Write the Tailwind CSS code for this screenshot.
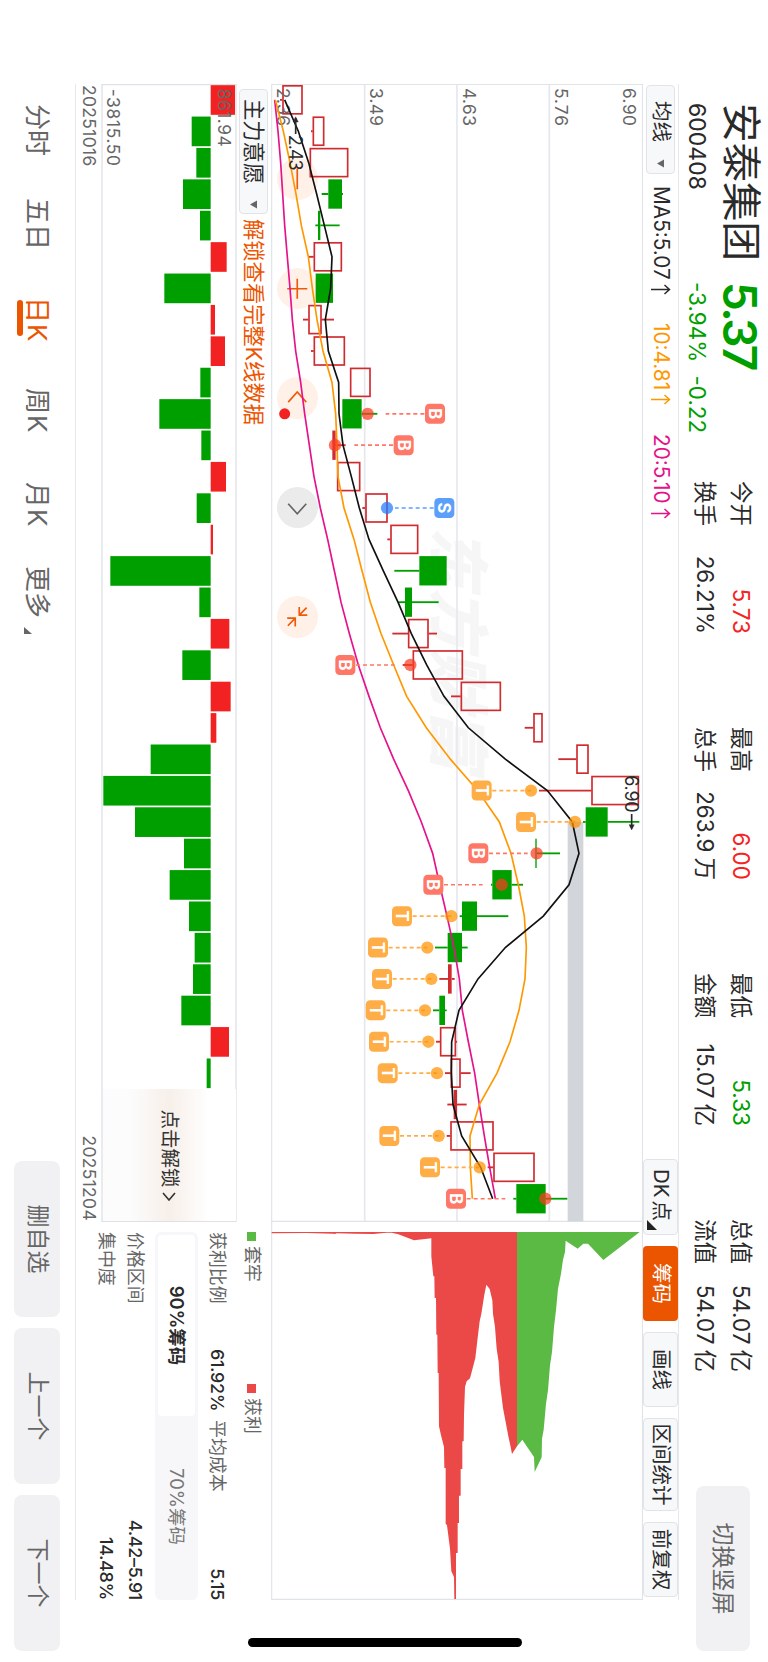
<!DOCTYPE html>
<html lang="zh-CN">
  <head>
    <meta charset="UTF-8" />
    <title>安泰集团 600408</title>
    <meta name="viewport" content="width=device-width, initial-scale=1.0" />
    <script src="https://cdn.jsdelivr.net/npm/@tailwindcss/browser@4"></script>
  </head>

  <body class="bg-white">
    <div class="relative w-[768px] h-[1662px] overflow-hidden">
      <!-- Landscape stage, turned a quarter clockwise -->
      <div
        class="absolute left-[768px] top-0 w-[1662px] h-[768px] origin-top-left rotate-90 flex flex-col pl-[84px] bg-white text-[#2a2a2a] leading-none whitespace-nowrap font-['Inter','Noto_Sans_CJK_SC',sans-serif]"
      >
        <!-- Quote header -->
        <header class="flex h-[89px] shrink-0">
          <div class="w-[397px] pl-[19px]">
            <div class="flex items-center h-[55px]">
              <h1 class="w-[179px] text-[39.5px]">安泰集团</h1>
              <span class="text-[46px] font-semibold tracking-[-2.6px] text-[#009f00]">5.37</span>
            </div>
            <div class="flex items-center h-[33px] text-[23px]">
              <span class="w-[179px]">600408</span>
              <span class="flex gap-[13px] text-[22.5px] text-[#009f00]"><span>-3.94%</span><span>-0.22</span></span>
            </div>
          </div>
          <div class="flex gap-[93px] pt-[9px] text-[22.5px]">
            <dl class="w-[153px] flex flex-col">
              <div class="flex items-center justify-between h-9"><dt>今开</dt><dd class="text-[#f52323]">5.73</dd></div>
              <div class="flex items-center justify-between h-9"><dt>换手</dt><dd>26.21%</dd></div>
            </dl>
            <dl class="w-[153px] flex flex-col">
              <div class="flex items-center justify-between h-9"><dt>最高</dt><dd class="text-[#f52323]">6.00</dd></div>
              <div class="flex items-center justify-between h-9"><dt>总手</dt><dd>263.9<span class="ml-[5px]">万</span></dd></div>
            </dl>
            <dl class="w-[153px] flex flex-col">
              <div class="flex items-center justify-between h-9"><dt>最低</dt><dd class="text-[#009f00]">5.33</dd></div>
              <div class="flex items-center justify-between h-9"><dt>金额</dt><dd>15.07<span class="ml-[5px]">亿</span></dd></div>
            </dl>
            <dl class="w-[153px] flex flex-col">
              <div class="flex items-center justify-between h-9"><dt>总值</dt><dd>54.07<span class="ml-[5px]">亿</span></dd></div>
              <div class="flex items-center justify-between h-9"><dt>流值</dt><dd>54.07<span class="ml-[5px]">亿</span></dd></div>
            </dl>
          </div>
          <button class="ml-auto mr-[11px] mt-[18px] w-[165px] h-[54px] rounded-lg bg-[#f1f1f3] text-[23px] text-[#666]">切换竖屏</button>
        </header>

        <!-- Moving averages and chart tools -->
        <div class="flex w-[1516px] h-[36px] shrink-0 items-center border-t border-[#e8e8ea] text-[20.5px]">
          <button class="flex items-center w-[89px] h-[29px] ml-px pl-[15px] gap-[17px] rounded border border-[#e1e3e8] bg-[#f7f8fa]">
            均线
            <svg width="9" height="7" viewBox="0 0 9 7"><path d="M0.5 0h8L4.5 7z" fill="#666" /></svg>
          </button>
          <div class="flex ml-3 text-[20.8px]">
            <span class="flex w-[137px]">MA5:5.07<svg class="ml-[3px]" width="13" height="21" viewBox="0 0 13 21"><path d="M6.5 20V1.5M2 6.5l4.5-5L11 6.5" fill="none" stroke="currentColor" stroke-width="1.5" /></svg></span>
            <span class="flex w-[111px] text-[#ff9800]">10:4.81<svg class="ml-[3px]" width="13" height="21" viewBox="0 0 13 21"><path d="M6.5 20V1.5M2 6.5l4.5-5L11 6.5" fill="none" stroke="currentColor" stroke-width="1.5" /></svg></span>
            <span class="flex text-[#e5128b]">20:5.10<svg class="ml-[3px]" width="13" height="21" viewBox="0 0 13 21"><path d="M6.5 20V1.5M2 6.5l4.5-5L11 6.5" fill="none" stroke="currentColor" stroke-width="1.5" /></svg></span>
          </div>
          <div class="flex gap-[11px] ml-auto mr-[3px]">
            <button class="relative w-[76px] h-[35px] pr-1 rounded border border-[#e1e3e8] bg-[#f7f8fa]">
              DK<span class="ml-[3px]">点</span>
              <svg class="absolute right-1 bottom-[3px]" width="10" height="10" viewBox="0 0 10 10"><path d="M0 10h10V0z" fill="#222" /></svg>
            </button>
            <button class="w-[75px] h-[35px] rounded bg-[#eb5500] text-white">筹码</button>
            <button class="w-[75px] h-[35px] rounded border border-[#e1e3e8] bg-[#f7f8fa]">画线</button>
            <button class="w-[93px] h-[35px] rounded border border-[#e1e3e8] bg-[#f7f8fa]">区间统计</button>
            <button class="w-[75px] h-[35px] rounded border border-[#e1e3e8] bg-[#f7f8fa]">前复权</button>
          </div>
        </div>

        <!-- Candles and chip distribution -->
        <div class="relative w-[1516px] h-[372px] shrink-0">
          <div class="absolute left-[443px] top-[154px] text-[61px] leading-[62px] font-black italic text-[#f6f6f6]">东方财富</div>
          <div class="absolute left-[74px] bottom-[6px] flex gap-[68px] text-[#f0590a]">
            <span class="size-[41.5px] rounded-full bg-[#fff1e8]"><svg viewBox="-62 -62 124 124"><path d="M-31 0H31" stroke="currentColor" stroke-width="5" /></svg></span>
            <span class="size-[41.5px] rounded-full bg-[#fff1e8]"><svg viewBox="-62 -62 124 124"><path d="M-30 0H30M0-30V30" stroke="currentColor" stroke-width="5" /></svg></span>
            <span class="size-[41.5px] rounded-full bg-[#fff1e8]"><svg viewBox="-62 -62 124 124"><path d="M13-27L-17 0L13 27" fill="none" stroke="currentColor" stroke-width="5" /></svg></span>
            <span class="size-[41.5px] rounded-full bg-[#ebebeb] text-[#666]"><svg viewBox="-62 -62 124 124"><path d="M-12-27L18 0L-12 27" fill="none" stroke="currentColor" stroke-width="5" /></svg></span>
            <span class="size-[41.5px] rounded-full bg-[#fff1e8]"><svg viewBox="-62 -62 124 124"><path d="M-29-6H-5V-30M-5-6L-27-28M29 6H4V30M4 6L27 28" fill="none" stroke="currentColor" stroke-width="5" /></svg></span>
          </div>
          <svg id="kline" class="relative" width="1516" height="372" viewBox="0 0 4548 1116"></svg>
        </div>

        <!-- Indicator pane on the left, chip figures on the right -->
        <div class="flex w-[1516px] h-[196px] shrink-0 border-b border-[#e8e8ea]">
          <div class="w-[1137px] text-[#666]">
            <div class="flex items-center h-[35px] pl-[5px] gap-[5px] text-[21.3px]">
              <button class="flex items-center w-[125px] h-[29px] pl-[9px] gap-[16px] rounded border border-[#e1e3e8] bg-[#f7f8fa] text-[#2a2a2a]">
                主力意愿
                <svg width="9" height="7" viewBox="0 0 9 7"><path d="M0.5 0h8L4.5 7z" fill="#666" /></svg>
              </button>
              <span class="text-[#eb5500]">解锁查看完整K线数据</span>
            </div>
            <div class="relative w-[1138px] h-[136px] -mt-px">
              <svg id="volume" width="1138" height="136" viewBox="0 0 3414 408"></svg>
              <button class="absolute right-px top-px w-[132px] h-[133px] pt-px text-[19.5px] text-[#333] flex items-center justify-center gap-1 bg-linear-to-b from-white via-[#f7efe9] to-[#fcfcfd] from-20% to-80%">
                点击解锁
                <svg width="9" height="14" viewBox="0 0 9 14"><path d="M1 1l7 6-7 6" fill="none" stroke="#333" stroke-width="1.6" /></svg>
              </button>
            </div>
            <div class="flex justify-between pt-[3px] pl-px text-[17.5px] tracking-[0.3px]">
              <span>20251016</span>
              <span>20251204</span>
            </div>
          </div>
          <div class="w-[379px] pl-[11px] text-[17.9px] text-[#666]">
            <div class="flex items-center h-[38px]">
              <span class="size-[9px] bg-[#5aba44]"></span>
              <span class="ml-[5px] w-[138px]">套牢</span>
              <span class="size-[9px] bg-[#eb4848]"></span>
              <span class="ml-[5px]">获利</span>
            </div>
            <div class="flex items-center h-[32px]">
              <span class="w-[117px]">获利比例</span>
              <span class="w-[71px] font-medium tracking-[-0.3px] text-[#2a2a2a]">61.92%</span>
              <span>平均成本</span>
              <span class="ml-auto font-medium tracking-[-0.3px] text-[#2a2a2a]">5.15</span>
            </div>
            <div class="flex h-[43px] mt-[3px] p-[3px] rounded-md bg-[#f7f7fa] text-[18.5px]">
              <span class="flex items-center justify-center w-[181px] rounded bg-white font-semibold text-[#2a2a2a]">90%筹码</span>
              <span class="flex items-center justify-center w-[181px] text-[#777]">70%筹码</span>
            </div>
            <div class="flex items-center justify-between h-[29px] mt-[5px]">
              <span>价格区间</span>
              <span class="font-medium tracking-[-0.3px] text-[#2a2a2a]">4.42–5.91</span>
            </div>
            <div class="flex items-center justify-between h-[29px]">
              <span>集中度</span>
              <span class="font-medium tracking-[-0.3px] text-[#2a2a2a]">14.48%</span>
            </div>
          </div>
        </div>

        <!-- Period tabs and stock switcher -->
        <footer class="flex items-center h-[75px] text-[#666]">
          <nav class="flex items-center w-[1077px] pl-5 text-[26px]">
            <a class="w-[94px]">分时</a>
            <a class="w-[99px]">五日</a>
            <a class="relative w-[91px] text-[#eb5500]">日<span class="ml-px">K</span><i class="absolute left-[3px] -bottom-[7px] w-9 h-[5.5px] rounded-full bg-[#eb5500]"></i></a>
            <a class="w-[94px]">周<span class="ml-px">K</span></a>
            <a class="w-[84px]">月<span class="ml-px">K</span></a>
            <a class="flex items-end gap-[9px]">更多<svg width="7" height="8" viewBox="0 0 7 8"><path d="M0 8h7V0z" fill="#666" /></svg></a>
          </nav>
          <div class="flex gap-[11px] text-[23px]">
            <button class="w-[156px] h-[46px] rounded-lg bg-[#f1f1f3]">删自选</button>
            <button class="w-[156px] h-[46px] rounded-lg bg-[#f1f1f3]">上一个</button>
            <button class="w-[156px] h-[46px] rounded-lg bg-[#f1f1f3]">下一个</button>
          </div>
        </footer>

        <!-- Home indicator -->
        <div class="absolute left-[1638px] top-[246px] w-[9px] h-[274px] rounded-full bg-black"></div>
      </div>
    </div>

    <script>
      const RED = "#d02b2f";
      const GREEN = "#009f00";
      const STEP = 94.19;
      const cx = (i) => 47.5 + STEP * i;
      const cy = (v) => 1209 - v;

      // [low, body bottom, body top, high, kind]; r = hollow red, R = solid red, g = green
      const candles = [
        [120, 127, 188, 188, "r"], [213, 218, 253, 253, "r"], [209, 209, 325, 325, "r"],
        [245, 265, 306, 309, "g"], [226, 234, 241, 299, "g"], [206, 221, 306, 306, "r"],
        [227, 227, 279, 279, "g"], [189, 205, 245, 282, "r"], [213, 221, 315, 315, "r"],
        [330, 330, 392, 392, "r"], [307, 307, 365, 412, "g"], [277, 277, 287, 317, "R"],
        [291, 291, 361, 361, "r"], [367, 376, 443, 443, "r"], [442, 451, 535, 535, "r"],
        [463, 538, 620, 620, "g"], [475, 495, 516, 596, "g"], [457, 504, 566, 591, "r"],
        [488, 518, 669, 669, "r"], [633, 662, 783, 783, "r"], [854, 880, 908, 908, "r"],
        [955, 1009, 1046, 1046, "r"], [897, 1054, 1197, 1197, "r"], [1029, 1037, 1103, 1198, "g"],
        [886, 886, 890, 960, "g"], [753, 757, 815, 849, "g"], [659, 666, 711, 805, "g"],
        [585, 623, 666, 683, "g"], [598, 624, 635, 644, "R"], [579, 598, 615, 620, "g"],
        [588, 600, 648, 651, "r"], [615, 632, 662, 692, "r"], [622, 641, 651, 680, "R"],
        [620, 631, 761, 761, "r"], [743, 760, 884, 884, "r"], [820, 829, 917, 982, "g"],
      ];
      const ma5 = [134, 175, 206, 230, 253, 276, 272, 256, 265, 296, 297, 309, 334, 358, 387, 430, 474, 514, 560, 612, 685, 796, 922, 997, 1017, 987, 910, 796, 714, 657, 635, 634, 639, 665, 722, 758];
      const ma10 = [106, 130, 150, 168, 184, 205, 217, 231, 249, 276, 287, 291, 294, 312, 342, 366, 391, 423, 461, 500, 559, 631, 713, 778, 813, 835, 853, 859, 855, 837, 810, 771, 718, 690, 691, 697];
      const ma20 = [104, 114, 122, 128, 134, 142, 150, 157, 167, 182, 194, 208, 222, 241, 263, 283, 303, 328, 355, 387, 421, 461, 505, 544, 578, 599, 621, 642, 658, 667, 685, 704, 718, 733, 749, 766];

      // [index, dot, badge, letter]
      const marks = [
        [10, 383, 585, "B"], [11, 285, 491, "B"], [13, 441, 613, "S"], [18, 511, 316, "B"],
        [22, 873, 725, "T"], [23, 1005, 858, "T"], [24, 890, 715, "B"], [25, 785, 580, "B"],
        [26, 634, 486, "T"], [27, 562, 414, "T"], [28, 574, 426, "T"], [29, 555, 407, "T"],
        [30, 565, 417, "T"], [31, 591, 443, "T"], [33, 596, 448, "T"], [34, 719, 570, "T"],
        [35, 916, 648, "B"],
      ];
      const markFill = { B: "#ff7766", T: "#ffad47", S: "#5c9ffb" };
      const dotFill = { B: "#f93c20", T: "#ff9100", S: "#1f7bff" };

      // [price level, depth]
      const profit = [[95, 4], [200, 3], [280, 5], [285, 6], [290, 4], [345, 5], [400, 6], [440, 2], [455, 2], [475, 7], [522, 25], [574, 19], [574, 73], [580, 133], [583, 133], [584, 198], [588, 198], [589, 308], [592, 308], [593, 423], [596, 423], [597, 583], [603, 610], [612, 645], [613, 708], [617, 708], [617, 875], [621, 880], [630, 950], [634, 1018], [642, 1035], [643, 1101], [648, 1101], [648, 963], [653, 963], [653, 873], [657, 873], [657, 791], [662, 791], [662, 711], [667, 711], [667, 628], [671, 628], [672, 548], [675, 465], [680, 448], [690, 439], [699, 405], [706, 378], [712, 326], [719, 268], [724, 245], [733, 188], [739, 158], [749, 171], [757, 205], [759, 245], [765, 285], [770, 350], [776, 390], [779, 448], [789, 528], [805, 613], [812, 645], [816, 666], [831, 643]];
      const trapped = [[831, 643], [847, 623], [882, 675], [884, 720], [905, 676], [906, 620], [911, 593], [918, 515], [924, 475], [930, 400], [936, 360], [942, 285], [948, 235], [954, 170], [963, 125], [969, 83], [975, 60], [977, 26], [1013, 50], [1030, 35], [1044, 35], [1090, 84], [1199, 0]];

      function line(values, color) {
        const pts = values.map((v, i) => `${cx(i)},${cy(v)}`).join(" ");
        return `<polyline points="${pts}" fill="none" stroke="${color}" stroke-width="5" />`;
      }

      function candle([low, bottom, top, high, kind], i) {
        const color = kind === "g" ? GREEN : RED;
        const x = cx(i);
        let s = "";
        if (low < bottom) s += `<path d="M${x} ${cy(low)}V${cy(bottom)}" stroke="${color}" stroke-width="5.5" />`;
        if (high > top) s += `<path d="M${x} ${cy(high)}V${cy(top)}" stroke="${color}" stroke-width="5.5" />`;
        if (kind === "r")
          s += `<rect x="${x - 42}" y="${cy(top) + 2}" width="84" height="${top - bottom - 4}" fill="none" stroke="${color}" stroke-width="5" />`;
        else
          s += `<rect x="${x - 44}" y="${cy(top)}" width="88" height="${top - bottom}" fill="${color}" />`;
        return s;
      }

      function mark([i, dot, badge, letter]) {
        const x = cx(i);
        const dir = dot > badge ? 1 : -1;
        return `<path d="M${x} ${cy(badge + 32 * dir)}V${cy(badge + 148 * dir)}" stroke="${markFill[letter]}" stroke-width="5" stroke-dasharray="12 9" />
          <circle cx="${x}" cy="${cy(dot)}" r="18.5" fill="${dotFill[letter]}" opacity="0.72" />
          <rect x="${x - 30}" y="${cy(badge) - 30}" width="60" height="60" rx="13" fill="${markFill[letter]}" />
          <text x="${x}" y="${cy(badge) + 18}" font-size="50" font-weight="700" text-anchor="middle" fill="#fff">${letter}</text>`;
      }

      function chips(points, from, to, color) {
        const body = points.map(([v, d]) => `${3444 + d},${cy(v)}`).join(" ");
        return `<polygon points="3444,${cy(from)} ${body} 3444,${cy(to)}" fill="${color}" />`;
      }

      const labels = [["2.36", 112], ["3.49", 390], ["4.63", 668], ["5.76", 946], ["6.90", 1148]];
      document.getElementById("kline").innerHTML =
        [374, 651, 928].map((v) => `<path d="M0 ${cy(v)}H3412" stroke="#e6e8ee" stroke-width="5" />`).join("") +
        `<path d="M1.5 1.5H4546V1114H1.5zM3412 0V1116" fill="none" stroke="#e0e3e8" stroke-width="3.5" />` +
        `<rect x="${cx(23)}" y="${cy(1030)}" width="${3412 - cx(23)}" height="47" fill="#d2d6db" />` +
        candles.map(candle).join("") +
        labels.map(([t, v]) => `<text x="12" y="${cy(v)}" font-size="52" fill="#666" textLength="114">${t}</text>`).join("") +
        line(ma20, "#e5128b") + line(ma10, "#ff9800") + line(ma5, "#111") +
        marks.map(mark).join("") +
        `<circle cx="${cx(10)}" cy="${cy(134)}" r="16.5" fill="#f32222" />` +
        `<g fill="#2a2a2a" stroke="#2a2a2a"><path d="M102 1042H150" stroke-width="5" /><path d="M98 1042l16-8v16z" />
          <path d="M2190 34H2232" stroke-width="5" /><path d="M2238 34l-16-8v16z" /></g>` +
        `<text x="152" y="${cy(147)}" font-size="54" fill="#2a2a2a" textLength="108">2.43</text>` +
        `<text x="2074" y="${cy(1154)}" font-size="54" fill="#2a2a2a" textLength="112">6.90</text>` +
        chips(profit, 95, 831, "#eb4848") + chips(trapped, 831, 1199, "#5aba44");

      const flows = [73, -57, -43, -83, -32, 48, -139, 13, 43, -31, -154, -28, 46, -42, 7, -301, -34, 56, -85, 60, 17, -180, -322, -227, -80, -123, -65, -48, -53, -88, 55, -12];
      document.getElementById("volume").innerHTML =
        `<path d="M1.5 3H3412V405H1.5z" fill="none" stroke="#e0e1e6" stroke-width="4" />` +
        flows.map((f, i) =>
          `<rect x="${cx(i) - 44}" y="${f > 0 ? 79 - f : 79}" width="89" height="${Math.abs(f)}" fill="${f > 0 ? "#f32222" : GREEN}" />`
        ).join("") +
        `<text x="14" y="56" font-size="52" fill="#666" textLength="174">861.94</text>
         <text x="14" y="391" font-size="52" fill="#666" textLength="232">-3815.50</text>`;
    </script>
  </body>
</html>
